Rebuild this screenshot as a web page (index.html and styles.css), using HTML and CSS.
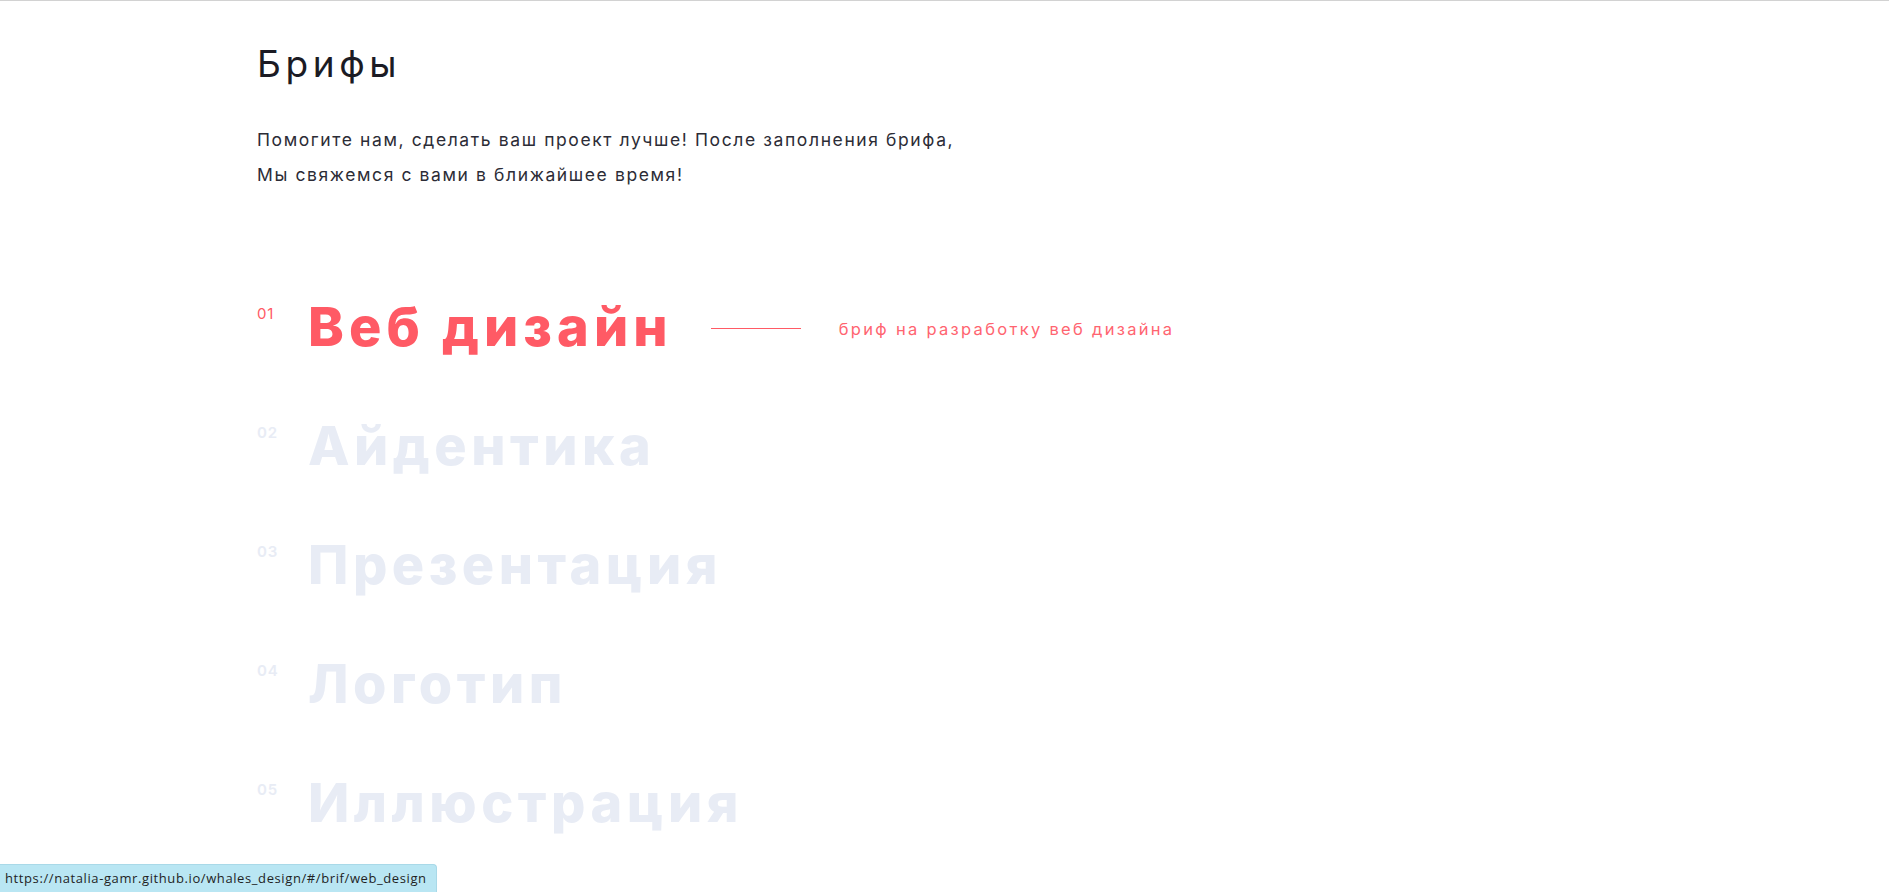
FILE: index.html
```html
<!DOCTYPE html>
<html lang="ru">
<head>
<meta charset="utf-8">
<title>Брифы</title>
<link rel="stylesheet" href="styles.css">
</head>
<body>
<div class="page">
  <main class="container">
    <h1 class="title">Брифы</h1>
    <p class="lead">Помогите нам, сделать ваш проект лучше! После заполнения брифа,<br>Мы свяжемся с вами в ближайшее время!</p>
    <ul class="briefs">
      <li class="brief brief--active">
        <span class="brief__num">01</span>
        <span class="brief__name">Веб дизайн</span>
        <span class="brief__line"></span>
        <span class="brief__desc">бриф на разработку веб дизайна</span>
      </li>
      <li class="brief">
        <span class="brief__num">02</span>
        <span class="brief__name">Айдентика</span>
      </li>
      <li class="brief">
        <span class="brief__num">03</span>
        <span class="brief__name">Презентация</span>
      </li>
      <li class="brief">
        <span class="brief__num">04</span>
        <span class="brief__name">Логотип</span>
      </li>
      <li class="brief">
        <span class="brief__num">05</span>
        <span class="brief__name">Иллюстрация</span>
      </li>
    </ul>
  </main>
</div>
<div class="status">https://natalia-gamr.github.io/whales_design/#/brif/web_design</div>
</body>
</html>
```
FILE: styles.css
```css
html, body {
  margin: 0;
  padding: 0;
  background: #ffffff;
}
body {
  font-family: Inter, "Noto Sans", "DejaVu Sans", sans-serif;
  color: #22222c;
  overflow: hidden;
}
.page {
  border-top: 1px solid #d2d2d2;
  min-height: 891px;
}
.container {
  width: 1375px;
  margin: 0 auto;
}
.title {
  margin: 0;
  padding-top: 40px;
  font-size: 37px;
  font-weight: 400;
  line-height: 45px;
  color: #1b1b24;
  letter-spacing: 4.6px;
}
.lead {
  margin: 36px 0 0;
  font-size: 17.5px;
  line-height: 35px;
  color: #2c2c36;
  letter-spacing: 1.6px;
}
.briefs {
  list-style: none;
  margin: 100px 0 0;
  padding: 0;
}
.brief {
  display: flex;
  align-items: flex-start;
  height: 119px;
  color: #e8ecf5;
}
.brief__num {
  margin-top: 12px;
  width: 51px;
  font-size: 15px;
  font-weight: 600;
  line-height: 20px;
  letter-spacing: 0.8px;
}
.brief__name {
  font-size: 54px;
  font-weight: 800;
  letter-spacing: 4.5px;
  line-height: 70px;
}
.brief--active {
  color: #ff5a65;
}
.brief--active .brief__name {
  letter-spacing: 5.1px;
}
.brief--active .brief__num {
  font-weight: 400;
}
.brief__line {
  margin-top: 36px;
  margin-left: 38px;
  width: 90px;
  height: 1px;
  background: #ff5a65;
}
.brief__desc {
  margin-top: 25px;
  margin-left: 38px;
  font-size: 16.5px;
  line-height: 24px;
  color: #ff6470;
  letter-spacing: 2.3px;
}
.status {
  position: fixed;
  left: 0;
  bottom: 0;
  height: 28px;
  padding: 0 9px 0 5px;
  box-sizing: border-box;
  background: #b9e6f3;
  border: 1px solid #a9d9e8;
  border-left: 0;
  border-bottom: 0;
  border-top-right-radius: 4px;
  font-family: "Open Sans", "DejaVu Sans", sans-serif;
  font-size: 13px;
  line-height: 27px;
  letter-spacing: 0.6px;
  color: #1f1f1f;
}
```
